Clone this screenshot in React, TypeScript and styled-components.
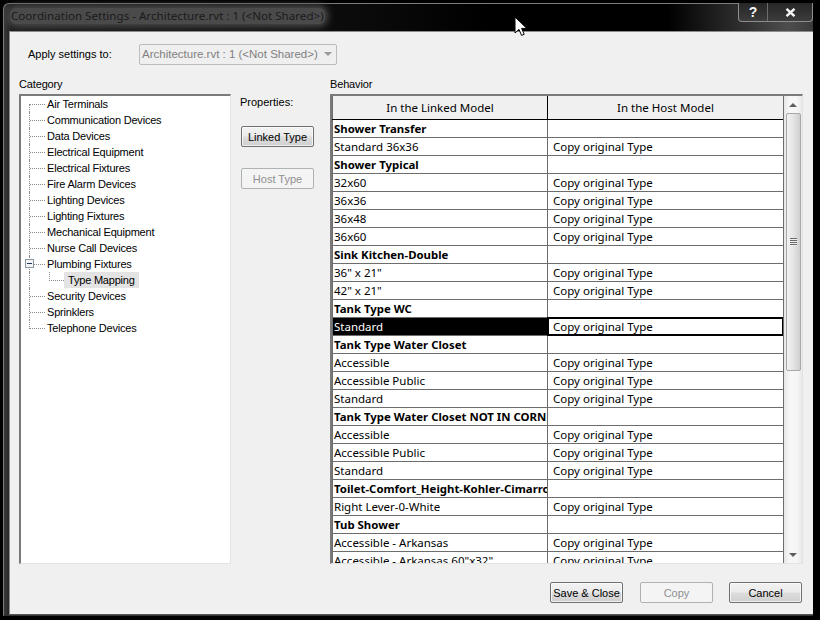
import React from 'react'
import styled, { createGlobalStyle } from 'styled-components'

const categories = [
  { label: 'Air Terminals', first: true },
  { label: 'Communication Devices' },
  { label: 'Data Devices' },
  { label: 'Electrical Equipment' },
  { label: 'Electrical Fixtures' },
  { label: 'Fire Alarm Devices' },
  { label: 'Lighting Devices' },
  { label: 'Lighting Fixtures' },
  { label: 'Mechanical Equipment' },
  { label: 'Nurse Call Devices' },
  { label: 'Plumbing Fixtures', expander: true },
  { label: 'Type Mapping', child: true },
  { label: 'Security Devices' },
  { label: 'Sprinklers' },
  { label: 'Telephone Devices', last: true },
]

const COPY = 'Copy original Type'

const rows: { left: string; right?: string; group?: boolean; selected?: boolean }[] = [
  { left: 'Shower Transfer', group: true },
  { left: 'Standard 36x36', right: COPY },
  { left: 'Shower Typical', group: true },
  { left: '32x60', right: COPY },
  { left: '36x36', right: COPY },
  { left: '36x48', right: COPY },
  { left: '36x60', right: COPY },
  { left: 'Sink Kitchen-Double', group: true },
  { left: '36" x 21"', right: COPY },
  { left: '42" x 21"', right: COPY },
  { left: 'Tank Type WC', group: true },
  { left: 'Standard', right: COPY, selected: true },
  { left: 'Tank Type Water Closet', group: true },
  { left: 'Accessible', right: COPY },
  { left: 'Accessible Public', right: COPY },
  { left: 'Standard', right: COPY },
  { left: 'Tank Type Water Closet NOT IN CORNER', group: true },
  { left: 'Accessible', right: COPY },
  { left: 'Accessible Public', right: COPY },
  { left: 'Standard', right: COPY },
  { left: 'Toilet-Comfort_Height-Kohler-Cimarron', group: true },
  { left: 'Right Lever-0-White', right: COPY },
  { left: 'Tub Shower', group: true },
  { left: 'Accessible - Arkansas', right: COPY },
  { left: 'Accessible - Arkansas 60"x32"', right: COPY },
]

export default function App() {
  return (
    <>
      <GlobalStyle />
      <Screen>
        <Window>
          <TitleBar>
            <TitleText>Coordination Settings - Architecture.rvt : 1 (&lt;Not Shared&gt;)</TitleText>
            <CaptionButtons>
              <CaptionButton>?</CaptionButton>
              <CaptionButton $wide>
                <svg width="11" height="9" viewBox="0 0 11 9">
                  <path d="M1.5 0.8l8 7.4M9.5 0.8l-8 7.4" stroke="#f4f4f4" strokeWidth="2.4" />
                </svg>
              </CaptionButton>
            </CaptionButtons>
          </TitleBar>
          <Client>
            <ApplyRow>
              <ApplyLabel>Apply settings to:</ApplyLabel>
              <Combo>
                <span>Architecture.rvt : 1 (&lt;Not Shared&gt;)</span>
                <ComboArrow />
              </Combo>
            </ApplyRow>
            <Columns>
              <CategoryColumn>
                <GroupLabel>Category</GroupLabel>
                <TreeBox>
                  {categories.map((c) => (
                    <TreeRow key={c.label} $child={c.child}>
                      {c.child ? <ChildGuide /> : <Guide $first={c.first} $last={c.last} />}
                      {c.expander && (
                        <Expander>
                          <svg width="9" height="9" viewBox="0 0 9 9">
                            <rect x="0.5" y="0.5" width="8" height="8" fill="#f4f4f4" stroke="#8a97a5" />
                            <path d="M2 4.5h5" stroke="#1f3a5c" />
                          </svg>
                        </Expander>
                      )}
                      <TreeLabel $selected={c.child}>{c.label}</TreeLabel>
                    </TreeRow>
                  ))}
                </TreeBox>
              </CategoryColumn>
              <PropertiesColumn>
                <PropertiesLabel>Properties:</PropertiesLabel>
                <SideButton>Linked Type</SideButton>
                <SideButton disabled>Host Type</SideButton>
              </PropertiesColumn>
              <BehaviorColumn>
                <GroupLabel>Behavior</GroupLabel>
                <GridBox>
                  <GridArea>
                    <HeaderRow>
                      <HeaderCell>In the Linked Model</HeaderCell>
                      <HeaderCell $end>In the Host Model</HeaderCell>
                    </HeaderRow>
                    {rows.map((r, i) => (
                      <Row key={i}>
                        <LeftCell $group={r.group} $selected={r.selected}>{r.left}</LeftCell>
                        <RightCell $selected={r.selected}>{r.right}</RightCell>
                      </Row>
                    ))}
                  </GridArea>
                  <Scrollbar>
                    <ScrollArrow $up />
                    <Thumb>
                      <Grip />
                    </Thumb>
                    <ScrollTrack />
                    <ScrollArrow />
                  </Scrollbar>
                </GridBox>
              </BehaviorColumn>
            </Columns>
            <Footer>
              <FooterButton>Save &amp; Close</FooterButton>
              <FooterButton disabled>Copy</FooterButton>
              <FooterButton>Cancel</FooterButton>
            </Footer>
          </Client>
        </Window>
        <Cursor width="14" height="22" viewBox="0 0 14 22">
          <path d="M1 1v16l4-3.6 2.6 6 2.6-1.1-2.6-5.9h5.2z" fill="#fff" stroke="#000" />
        </Cursor>
      </Screen>
    </>
  )
}

const GlobalStyle = createGlobalStyle`
  html, body {
    margin: 0;
    background: #000;
  }
  * {
    box-sizing: border-box;
  }
`

const gridFont = `"Noto Sans", "Open Sans", sans-serif`

const Screen = styled.div`
  position: relative;
  width: 820px;
  height: 620px;
  overflow: hidden;
  background: #000;
  padding: 3px 7px 4px 3px;
  font-family: "Liberation Sans", Arial, sans-serif;
  font-size: 11px;
  color: #000;
`

const Window = styled.div`
  width: 810px;
  height: 613px;
  display: flex;
  flex-direction: column;
  border: 1px solid #7c7c7c;
  border-bottom-color: #333;
  border-right: none;
  border-radius: 6px 6px 0 0;
  padding-left: 5px;
  background: linear-gradient(90deg, #3a3a3a 0, #1c1c1c 8px, #0a0a0a 45%, #000 60%, #000 82%, #2e2e2e 91%, #4e4e4e 97%, #3a3a3a 100%);
`

const TitleBar = styled.div`
  height: 27px;
  flex: none;
  display: flex;
  justify-content: space-between;
  align-items: flex-start;
`

const TitleText = styled.div`
  margin-top: 4px;
  margin-left: 1px;
  padding: 0 1px;
  font-family: ${gridFont};
  font-size: 11.6px;
  line-height: 16px;
  color: #1a1a1a;
  background: #4a4a4a;
  border-radius: 6px;
  box-shadow: 0 0 7px 3px #4a4a4a;
`

const CaptionButtons = styled.div`
  display: flex;
  height: 19px;
  margin-top: -1px;
  border: 1px solid #8d8d8d;
  border-top: none;
  border-radius: 0 0 4px 4px;
  background: linear-gradient(180deg, #262626, #3c3c3c);
`

const CaptionButton = styled.div<{ $wide?: boolean }>`
  width: ${(p) => (p.$wide ? 45 : 28)}px;
  display: flex;
  align-items: center;
  justify-content: center;
  color: #f4f4f4;
  font-weight: 700;
  font-size: 14px;
  line-height: 18px;
  border-left: ${(p) => (p.$wide ? '1px solid #6d6d6d' : 'none')};
`

const Client = styled.div`
  flex: 1;
  min-height: 0;
  display: flex;
  flex-direction: column;
  background: #f0f0f0;
  border: 1px solid #8c8c8c;
  border-right: none;
  border-bottom: 1px solid #555;
  padding: 11px 10px 0 9px;
`

const ApplyRow = styled.div`
  height: 22px;
  display: flex;
  align-items: center;
  padding-left: 9px;
`

const ApplyLabel = styled.div`
  width: 111px;
`

const Combo = styled.div`
  width: 198px;
  height: 21px;
  display: flex;
  align-items: center;
  justify-content: space-between;
  padding: 0 4px 0 2px;
  font-size: 11.5px;
  border: 1px solid #bcbcbc;
  border-radius: 2px;
  background: #efefef;
  color: #7f7f7f;
  white-space: nowrap;
`

const ComboArrow = styled.div`
  width: 0;
  height: 0;
  border-left: 4px solid transparent;
  border-right: 4px solid transparent;
  border-top: 4px solid #9a9a9a;
`

const Columns = styled.div`
  display: flex;
  margin-top: 11px;
`

const GroupLabel = styled.div`
  height: 18px;
  line-height: 17px;
  letter-spacing: -0.15px;
`

const CategoryColumn = styled.div`
  width: 212px;
  flex: none;
`

const TreeBox = styled.div`
  height: 470px;
  background: #fff;
  border: 1px solid #e3e3e3;
  border-top: 2px solid #7a7a7a;
  border-left: 2px solid #7a7a7a;
`

const TreeRow = styled.div<{ $child?: boolean }>`
  position: relative;
  height: 16px;
  display: flex;
  align-items: center;
  letter-spacing: -0.2px;
  padding-left: ${(p) => (p.$child ? 43 : 25)}px;
`

const Guide = styled.div<{ $first?: boolean; $last?: boolean }>`
  position: absolute;
  left: 8px;
  top: ${(p) => (p.$first ? 8 : 0)}px;
  width: 15px;
  height: ${(p) => (p.$last ? 9 : p.$first ? 8 : 16)}px;
  border-left: 1px dotted #8a8a8a;
  &::after {
    content: '';
    position: absolute;
    left: 0;
    top: ${(p) => (p.$first ? 0 : 8)}px;
    width: 15px;
    border-top: 1px dotted #8a8a8a;
  }
`

const ChildGuide = styled.div`
  position: absolute;
  left: 28px;
  top: 0;
  width: 15px;
  height: 9px;
  border-left: 1px dotted #8a8a8a;
  border-bottom: 1px dotted #8a8a8a;
  &::before {
    content: '';
    position: absolute;
    left: -21px;
    top: 0;
    height: 16px;
    border-left: 1px dotted #8a8a8a;
  }
`

const Expander = styled.div`
  position: absolute;
  left: 4px;
  top: 3px;
  width: 9px;
  height: 9px;
  line-height: 0;
`

const TreeLabel = styled.div<{ $selected?: boolean }>`
  line-height: 16px;
  padding: ${(p) => (p.$selected ? '0 4px' : '0 1px')};
  white-space: nowrap;
  background: ${(p) => (p.$selected ? '#e3e3e3' : 'transparent')};
`

const PropertiesColumn = styled.div`
  width: 99px;
  flex: none;
  display: flex;
  flex-direction: column;
  padding: 18px 0 0 10px;
`

const PropertiesLabel = styled.div`
  height: 32px;
  line-height: 16px;
  margin-left: -1px;
`

const Button = styled.button`
  height: 21px;
  padding: 0;
  font: inherit;
  color: #000;
  border: 1px solid #707070;
  border-radius: 2px;
  background: linear-gradient(180deg, #f2f2f2 0, #ebebeb 48%, #dddddd 52%, #cfcfcf 100%);
  box-shadow: inset 0 0 0 1px rgba(255, 255, 255, 0.7);
  &:disabled {
    color: #8f8f8f;
    border-color: #adb2b5;
    background: #f4f4f4;
    box-shadow: none;
  }
`

const SideButton = styled(Button)`
  width: 73px;
  margin-bottom: 21px;
`

const BehaviorColumn = styled.div`
  width: 473px;
  flex: none;
`

const GridBox = styled.div`
  height: 470px;
  display: flex;
  background: #fff;
  font-family: ${gridFont};
  font-size: 11.5px;
  border-top: 2px solid #7a7a7a;
  border-left: 2px solid #7a7a7a;
  border-right: 1px solid #e3e3e3;
  border-bottom: 1px solid #e3e3e3;
`

const GridArea = styled.div`
  width: 452px;
  flex: none;
  overflow: hidden;
  border-right: 1px solid #6d6d6d;
`

const HeaderRow = styled.div`
  display: flex;
  height: 24px;
  background: #f0f0f0;
  border-bottom: 1px solid #000;
`

const HeaderCell = styled.div<{ $end?: boolean }>`
  width: ${(p) => (p.$end ? 236 : 216)}px;
  flex: none;
  text-align: center;
  line-height: 23px;
  border-right: 1px solid #000;
  border-left: ${(p) => (p.$end ? 'none' : '1px solid #6d6d6d')};
`

const Row = styled.div`
  display: flex;
  height: 18px;
  border-bottom: 1px solid #6d6d6d;
`

const LeftCell = styled.div<{ $group?: boolean; $selected?: boolean }>`
  width: 216px;
  flex: none;
  overflow: hidden;
  white-space: nowrap;
  padding-left: 1px;
  line-height: 17px;
  font-size: ${(p) => (p.$group ? 11.4 : 11.5)}px;
  font-weight: ${(p) => (p.$group ? 700 : 400)};
  background: ${(p) => (p.$selected ? '#000' : 'transparent')};
  color: ${(p) => (p.$selected ? '#fff' : '#000')};
  border-left: 1px solid #6d6d6d;
  border-right: 1px solid #6d6d6d;
`

const RightCell = styled.div<{ $selected?: boolean }>`
  flex: 1;
  padding-left: 5px;
  line-height: 17px;
  white-space: nowrap;
  ${(p) => p.$selected && 'outline: 2px solid #000; outline-offset: -1px; position: relative;'}
`

const Scrollbar = styled.div`
  flex: 1;
  display: flex;
  flex-direction: column;
  align-items: center;
  background: linear-gradient(90deg, #e6e6e6, #f6f6f6 30%, #f6f6f6 70%, #e9e9e9);
`

const ScrollArrow = styled.div<{ $up?: boolean }>`
  height: 17px;
  flex: none;
  width: 100%;
  display: flex;
  align-items: center;
  justify-content: center;
  &::after {
    content: '';
    width: 0;
    height: 0;
    border-left: 4px solid transparent;
    border-right: 4px solid transparent;
    ${(p) => (p.$up ? 'border-bottom: 4px solid #5e5e5e;' : 'border-top: 4px solid #5e5e5e;')}
  }
`

const Thumb = styled.div`
  width: 15px;
  height: 258px;
  flex: none;
  display: flex;
  align-items: center;
  justify-content: center;
  border: 1px solid #a8a8a8;
  border-radius: 2px;
  background: linear-gradient(90deg, #f2f2f2, #e4e4e4 50%, #cfcfcf);
`

const Grip = styled.div`
  width: 7px;
  height: 8px;
  background: repeating-linear-gradient(180deg, #6a6a6a 0, #6a6a6a 1px, #efefef 1px, #efefef 2px);
`

const ScrollTrack = styled.div`
  flex: 1;
`

const Footer = styled.div`
  display: flex;
  justify-content: flex-end;
  gap: 16px;
  margin-top: 18px;
  padding-right: 1px;
`

const FooterButton = styled(Button)`
  width: 73px;
  &:first-child {
    margin-right: 1px;
  }
`

const Cursor = styled.svg`
  position: absolute;
  left: 514px;
  top: 16px;
`
